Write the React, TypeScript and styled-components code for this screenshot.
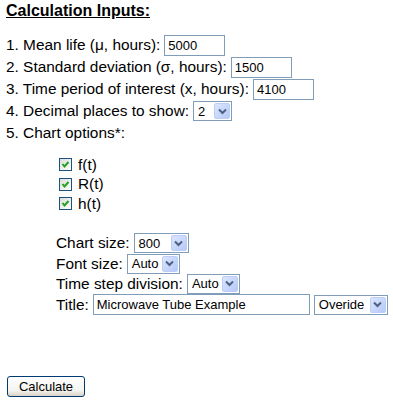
import React from 'react';
import styled, {createGlobalStyle} from "styled-components";

const GlobalStyle = createGlobalStyle`
  body {
    margin: 0;
    background: #ffffff;
    font-family: "Liberation Sans", Arial, sans-serif;
    color: #000000;
  }
`

const Page = styled.div`
  width: 393px;
  height: 405px;
  padding: 1px 0 0 6px;
  box-sizing: border-box;
  font-size: 15.4px;
`
const Heading = styled.h3`
  margin: 0 0 13px 0;
  font-size: 16px;
  line-height: 20px;
  font-weight: bold;
  text-decoration: underline;
`
const Row = styled.div<{ h?: number }>`
  display: flex;
  align-items: center;
  gap: 4px;
  height: ${p => p.h || 22}px;
  white-space: nowrap;
`
const TextInput = styled.div<{ w: number }>`
  box-sizing: border-box;
  width: ${p => p.w}px;
  height: 21px;
  border: 1px solid #7f9db9;
  background: #fff;
  font-size: 13px;
  line-height: 19px;
  padding: 0 3px;
`
const SelectBox = styled.div<{ w: number }>`
  box-sizing: border-box;
  width: ${p => p.w}px;
  height: 20px;
  border: 1px solid #7f9db9;
  background: #fff;
  display: flex;
  align-items: center;
  justify-content: space-between;
  padding: 1px;
  font-size: 13px;
`
const SelectValue = styled.span`
  padding-left: 3px;
`
const ArrowButton = styled.span`
  width: 16px;
  height: 16px;
  box-sizing: border-box;
  border: 1px solid #bccdf9;
  border-radius: 2px;
  background: linear-gradient(135deg, #dbe5fd, #b6c9f7);
  display: flex;
  align-items: center;
  justify-content: center;
`
const CheckList = styled.div`
  margin-top: 11px;
  padding-left: 53px;
`
const CheckRow = styled.label`
  display: flex;
  align-items: center;
  gap: 6px;
  height: 19.5px;
`
const CheckBox = styled.span`
  box-sizing: border-box;
  width: 13px;
  height: 13px;
  border: 1px solid #1c5180;
  background: linear-gradient(135deg, #dcdcd7, #ffffff);
  display: flex;
  align-items: center;
  justify-content: center;
`
const Options = styled.div`
  margin-top: 19px;
  padding-left: 50px;
`
const CalcButton = styled.button`
  margin-top: 60px;
  margin-left: 1px;
  width: 78px;
  height: 21px;
  border: 1px solid #003c74;
  border-radius: 3px;
  background: linear-gradient(#ffffff, #f4f4f0 70%, #d8d2c6);
  font-family: "Liberation Sans", Arial, sans-serif;
  font-size: 13px;
  color: #000;
  padding: 0;
`

const Select = ({value, w}: { value: string; w: number }) => (
    <SelectBox w={w}>
        <SelectValue>{value}</SelectValue>
        <ArrowButton>
            <svg width="9" height="7" viewBox="0 0 9 7">
                <path d="M1 1.5 L4.5 5 L8 1.5" fill="none" stroke="#4d6185" strokeWidth="2"/>
            </svg>
        </ArrowButton>
    </SelectBox>
)

const Check = ({label}: { label: string }) => (
    <CheckRow>
        <CheckBox>
            <svg width="9" height="9" viewBox="0 0 9 9">
                <path d="M1.5 4 L3.5 6.5 L7.5 2" fill="none" stroke="#21a121" strokeWidth="2"/>
            </svg>
        </CheckBox>
        {label}
    </CheckRow>
)

export default function App() {
    return (
        <>
            <GlobalStyle/>
            <Page>
                <Heading>Calculation Inputs:</Heading>
                <Row>1. Mean life (μ, hours):<TextInput w={61}>5000</TextInput></Row>
                <Row>2. Standard deviation (σ, hours):<TextInput w={61}>1500</TextInput></Row>
                <Row>3. Time period of interest (x, hours):<TextInput w={61}>4100</TextInput></Row>
                <Row>4. Decimal places to show:<Select value="2" w={39}/></Row>
                <Row>5. Chart options*:</Row>
                <CheckList>
                    <Check label="f(t)"/>
                    <Check label="R(t)"/>
                    <Check label="h(t)"/>
                </CheckList>
                <Options>
                    <Row h={21}>Chart size:<Select value="800" w={55}/></Row>
                    <Row h={20}>Font size:<Select value="Auto" w={53}/></Row>
                    <Row h={20}>Time step division:<Select value="Auto" w={53}/></Row>
                    <Row h={22}>
                        Title:<TextInput w={217}>Microwave Tube Example</TextInput>
                        <Select value="Overide" w={74}/>
                    </Row>
                </Options>
                <CalcButton>Calculate</CalcButton>
            </Page>
        </>
    );
}
